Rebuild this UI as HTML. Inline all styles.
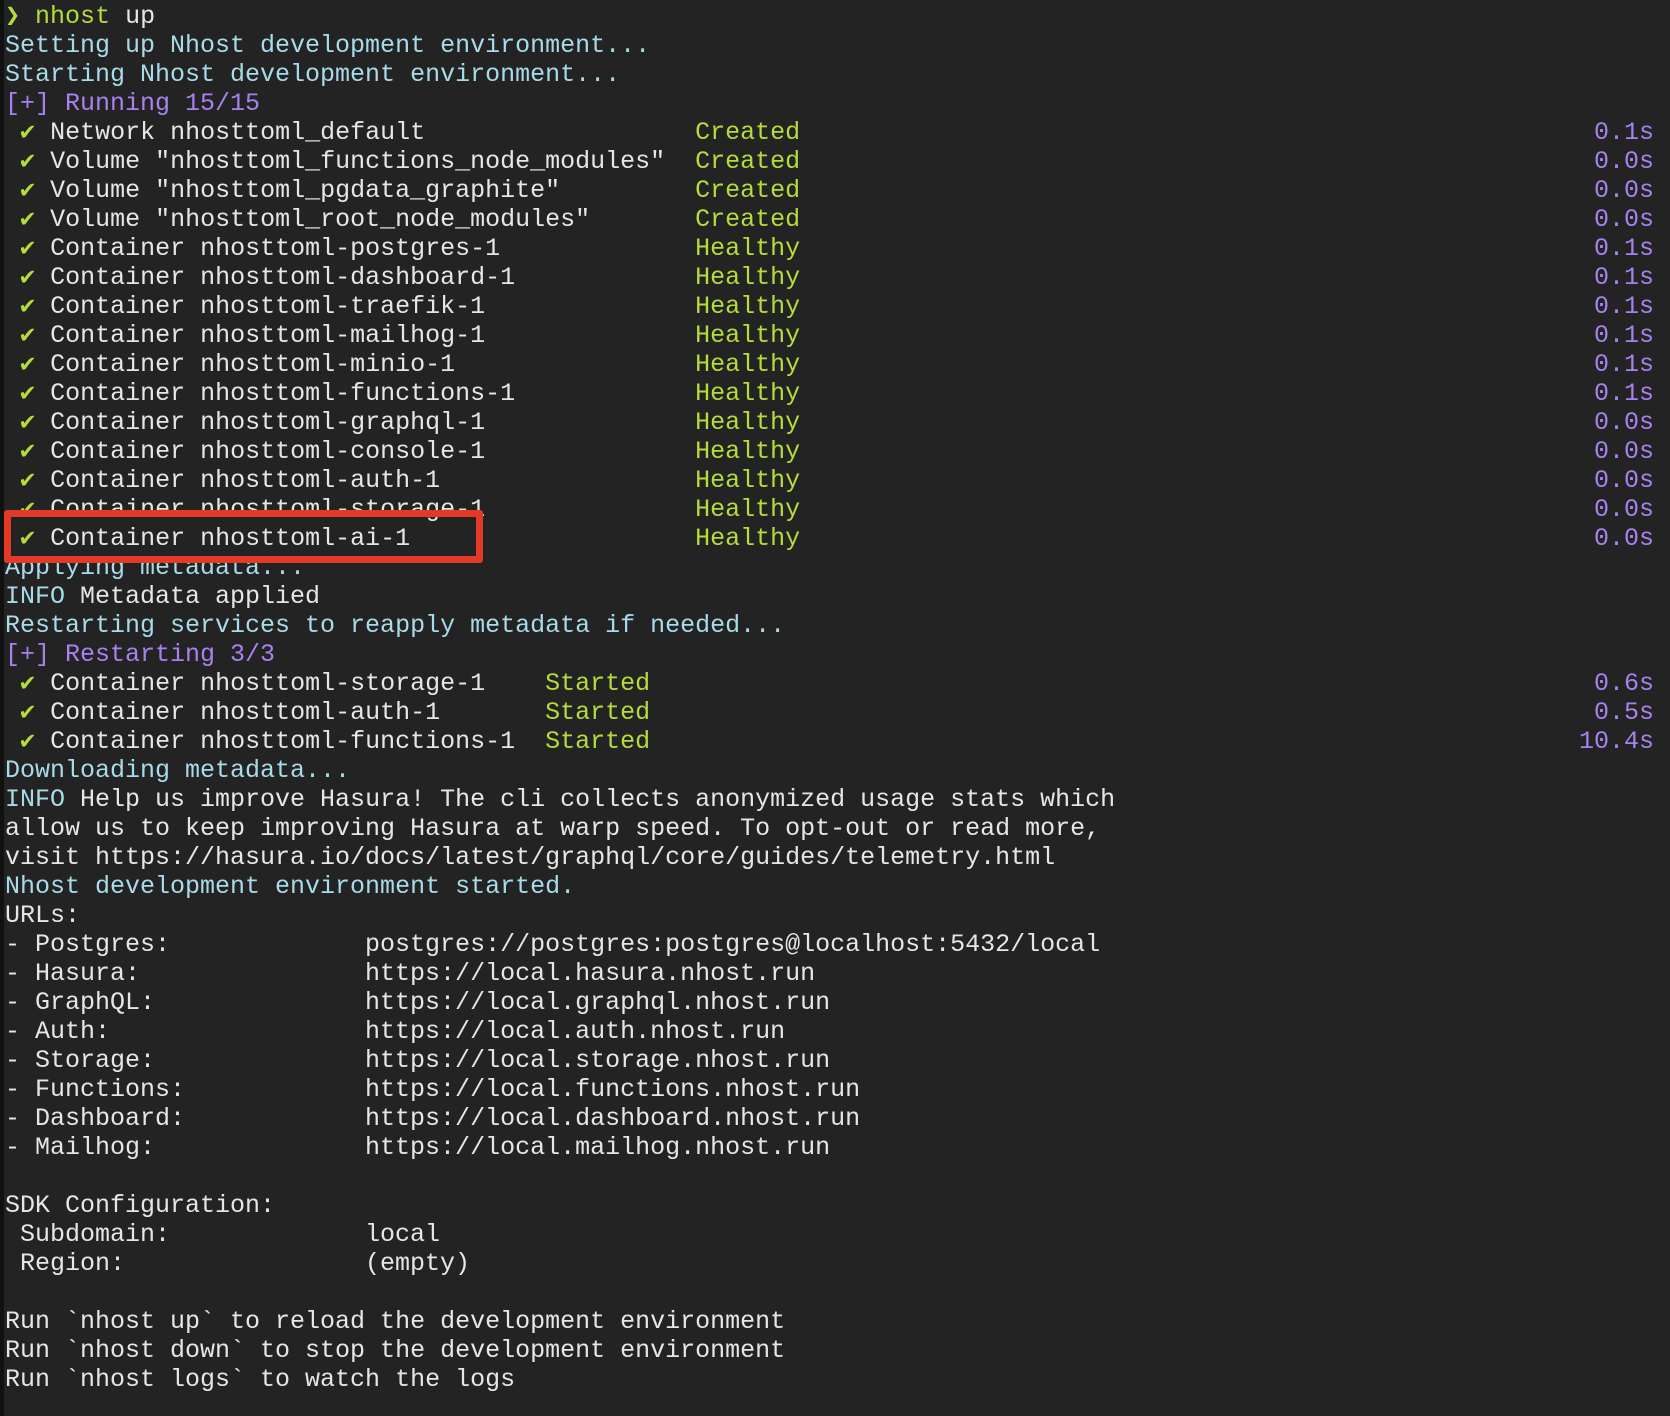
<!DOCTYPE html>
<html><head><meta charset="utf-8"><style>
html,body{margin:0;padding:0;background:#232323;width:1670px;height:1416px;overflow:hidden}
body{border-left:4px solid #111;box-sizing:border-box}
#t{position:absolute;left:5px;top:2px;font-family:"Liberation Mono","DejaVu Sans Mono",monospace;font-size:25px;line-height:29px;color:#e6e6e6}
.l{position:relative;height:29px;width:1650px;white-space:pre}
.c{color:#a8dbe9}.p{color:#a782ef}.g{color:#b4dc3a}
.a{display:inline-block;width:46ch}.b{display:inline-block;width:36ch}.u{display:inline-block;width:24ch}
.r{position:absolute;right:1px;top:0;color:#a782ef}
.box{position:absolute;left:4px;top:510px;width:479px;height:53px;border:7px solid #e23a26;box-sizing:border-box;border-radius:3px}
</style></head><body>
<div id="t">
<div class="l"><span class="g">❯ nhost</span> up</div>
<div class="l c">Setting up Nhost development environment...</div>
<div class="l c">Starting Nhost development environment...</div>
<div class="l p">[+] Running 15/15</div>
<div class="l"><span class="a"> <span class="g">✔</span> Network nhosttoml_default</span><span class="g">Created</span><span class="r">0.1s</span></div>
<div class="l"><span class="a"> <span class="g">✔</span> Volume "nhosttoml_functions_node_modules"</span><span class="g">Created</span><span class="r">0.0s</span></div>
<div class="l"><span class="a"> <span class="g">✔</span> Volume "nhosttoml_pgdata_graphite"</span><span class="g">Created</span><span class="r">0.0s</span></div>
<div class="l"><span class="a"> <span class="g">✔</span> Volume "nhosttoml_root_node_modules"</span><span class="g">Created</span><span class="r">0.0s</span></div>
<div class="l"><span class="a"> <span class="g">✔</span> Container nhosttoml-postgres-1</span><span class="g">Healthy</span><span class="r">0.1s</span></div>
<div class="l"><span class="a"> <span class="g">✔</span> Container nhosttoml-dashboard-1</span><span class="g">Healthy</span><span class="r">0.1s</span></div>
<div class="l"><span class="a"> <span class="g">✔</span> Container nhosttoml-traefik-1</span><span class="g">Healthy</span><span class="r">0.1s</span></div>
<div class="l"><span class="a"> <span class="g">✔</span> Container nhosttoml-mailhog-1</span><span class="g">Healthy</span><span class="r">0.1s</span></div>
<div class="l"><span class="a"> <span class="g">✔</span> Container nhosttoml-minio-1</span><span class="g">Healthy</span><span class="r">0.1s</span></div>
<div class="l"><span class="a"> <span class="g">✔</span> Container nhosttoml-functions-1</span><span class="g">Healthy</span><span class="r">0.1s</span></div>
<div class="l"><span class="a"> <span class="g">✔</span> Container nhosttoml-graphql-1</span><span class="g">Healthy</span><span class="r">0.0s</span></div>
<div class="l"><span class="a"> <span class="g">✔</span> Container nhosttoml-console-1</span><span class="g">Healthy</span><span class="r">0.0s</span></div>
<div class="l"><span class="a"> <span class="g">✔</span> Container nhosttoml-auth-1</span><span class="g">Healthy</span><span class="r">0.0s</span></div>
<div class="l"><span class="a"> <span class="g">✔</span> Container nhosttoml-storage-1</span><span class="g">Healthy</span><span class="r">0.0s</span></div>
<div class="l"><span class="a"> <span class="g">✔</span> Container nhosttoml-ai-1</span><span class="g">Healthy</span><span class="r">0.0s</span></div>
<div class="l c">Applying metadata...</div>
<div class="l"><span class="c">INFO</span> Metadata applied</div>
<div class="l c">Restarting services to reapply metadata if needed...</div>
<div class="l p">[+] Restarting 3/3</div>
<div class="l"><span class="b"> <span class="g">✔</span> Container nhosttoml-storage-1</span><span class="g">Started</span><span class="r">0.6s</span></div>
<div class="l"><span class="b"> <span class="g">✔</span> Container nhosttoml-auth-1</span><span class="g">Started</span><span class="r">0.5s</span></div>
<div class="l"><span class="b"> <span class="g">✔</span> Container nhosttoml-functions-1</span><span class="g">Started</span><span class="r">10.4s</span></div>
<div class="l c">Downloading metadata...</div>
<div class="l"><span class="c">INFO</span> Help us improve Hasura! The cli collects anonymized usage stats which</div>
<div class="l">allow us to keep improving Hasura at warp speed. To opt-out or read more,</div>
<div class="l">visit https://hasura.io/docs/latest/graphql/core/guides/telemetry.html</div>
<div class="l c">Nhost development environment started.</div>
<div class="l">URLs:</div>
<div class="l"><span class="u">- Postgres:</span>postgres://postgres:postgres@localhost:5432/local</div>
<div class="l"><span class="u">- Hasura:</span>https://local.hasura.nhost.run</div>
<div class="l"><span class="u">- GraphQL:</span>https://local.graphql.nhost.run</div>
<div class="l"><span class="u">- Auth:</span>https://local.auth.nhost.run</div>
<div class="l"><span class="u">- Storage:</span>https://local.storage.nhost.run</div>
<div class="l"><span class="u">- Functions:</span>https://local.functions.nhost.run</div>
<div class="l"><span class="u">- Dashboard:</span>https://local.dashboard.nhost.run</div>
<div class="l"><span class="u">- Mailhog:</span>https://local.mailhog.nhost.run</div>
<div class="l"></div>
<div class="l">SDK Configuration:</div>
<div class="l"><span class="u"> Subdomain:</span>local</div>
<div class="l"><span class="u"> Region:</span>(empty)</div>
<div class="l"></div>
<div class="l">Run `nhost up` to reload the development environment</div>
<div class="l">Run `nhost down` to stop the development environment</div>
<div class="l">Run `nhost logs` to watch the logs</div>
</div>
<div class="box"></div>
</body></html>
